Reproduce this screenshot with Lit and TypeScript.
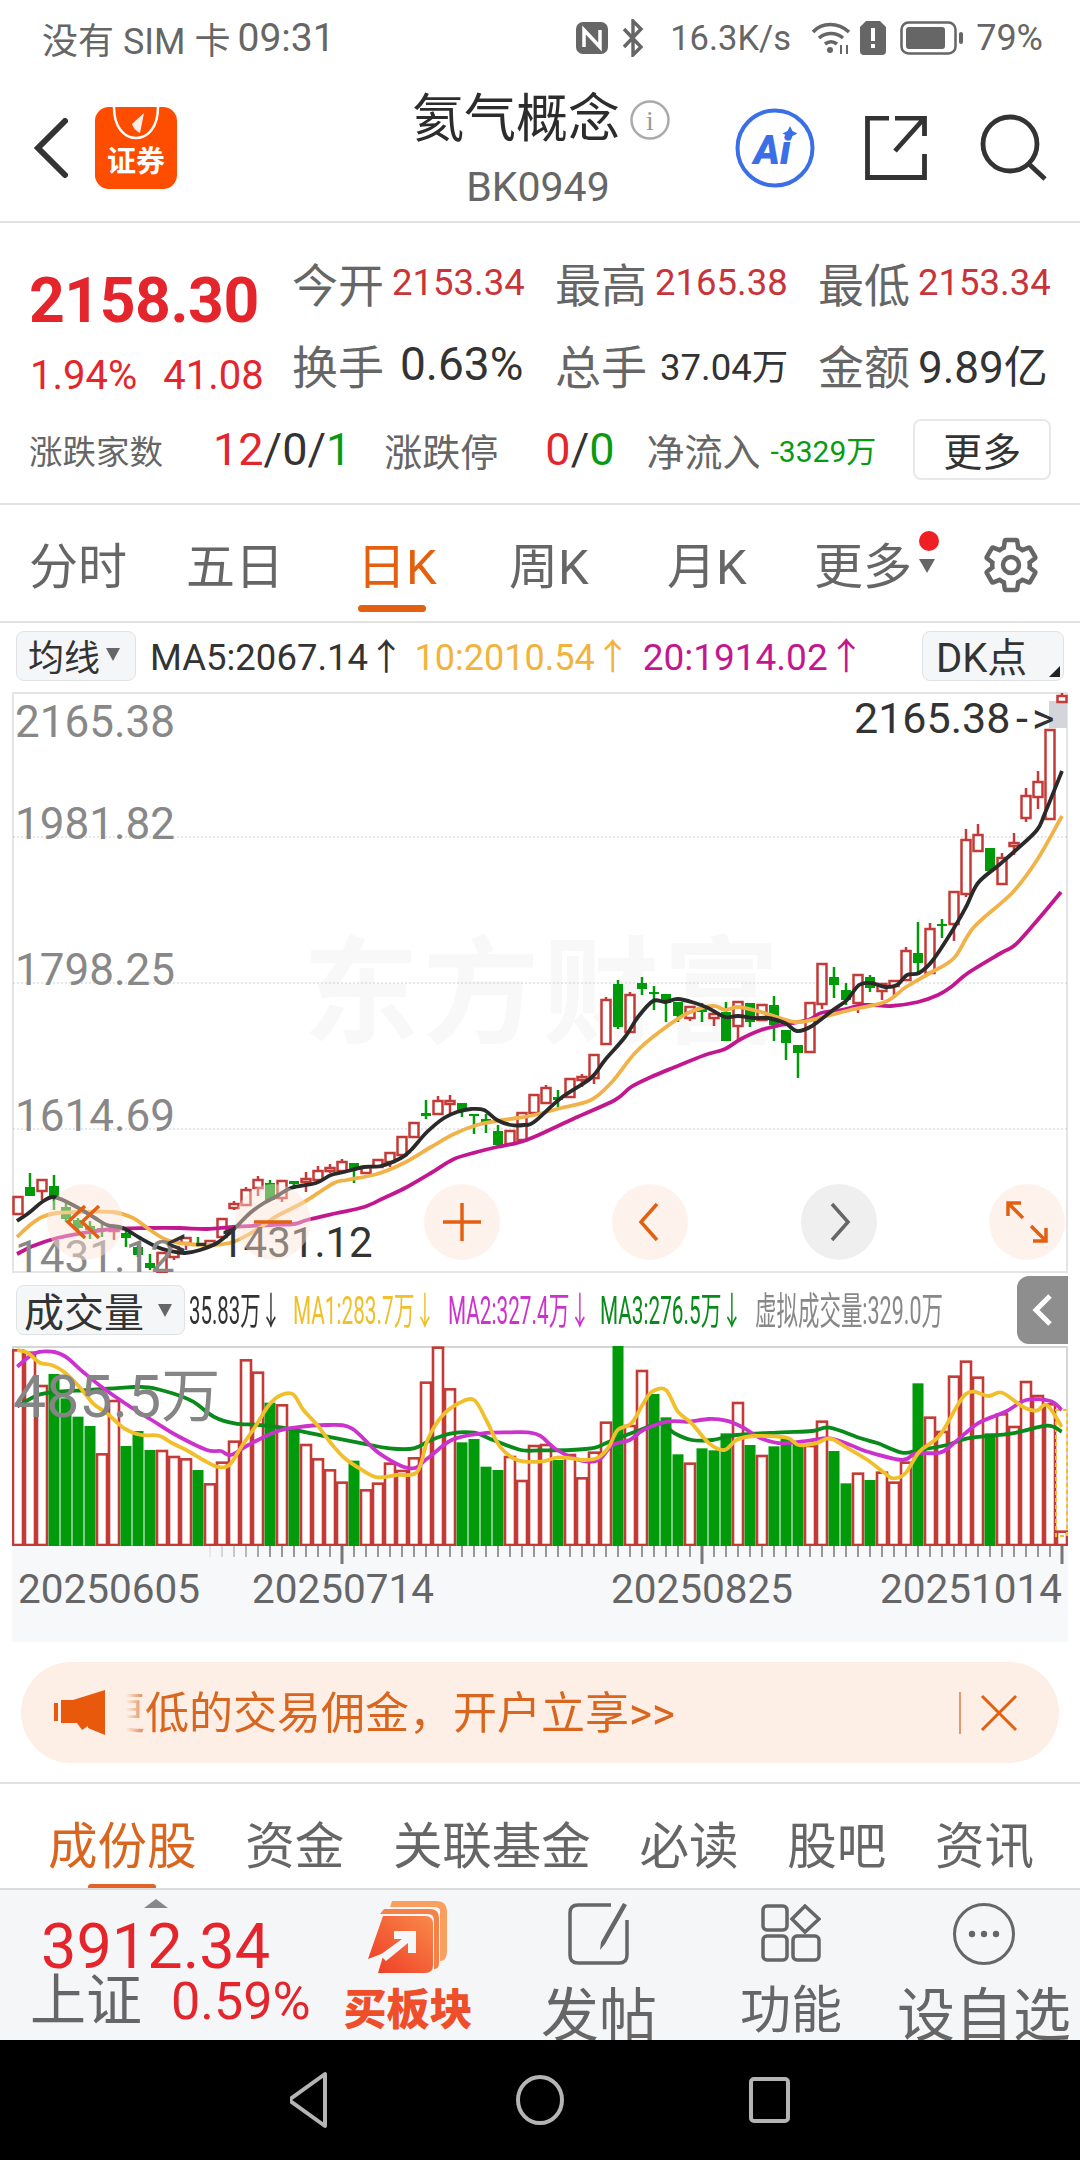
import { LitElement, html, css, svg } from 'lit';
import { customElement } from 'lit/decorators.js';

type Pt = number[];

// [colour, body top, body bottom, wick high, wick low, volume top in the zoomed crop]
const BARS: [string, number, number, number, number, number][] = [
  ['r',1197,1214,0,0,238],['g',1187,1196,1173,0,245],['r',1180,1191,0,1200,345],['g',1186,1199,1175,1210,312],
  ['g',1207,1219,1203,1222,385],['g',1220,1228,1218,1232,440],['g',1226,1230,1221,1239,468],['g',1228,1231,1224,1237,550],
  ['r',1228,1231,0,1240,390],['g',1233,1238,1228,1247,528],['g',1247,1255,1243,1257,483],['g',1263,1268,1254,1270,540],
  ['r',1253,1273,0,0,540],['r',1247,1257,0,1260,558],['r',1238,1243,0,1250,565],['g',1243,1245,1237,1247,600],
  ['r',1241,1245,0,1248,640],['r',1219,1237,0,0,575],['r',1204,1208,1201,1210,512],['r',1190,1205,1187,0,268],
  ['r',1180,1188,1176,1196,305],['g',1183,1200,1180,0,398],['r',1181,1198,0,1202,403],['g',1181,1184,0,1189,480],
  ['r',1179,1182,1172,1192,522],['r',1171,1180,1166,0,565],['r',1168,1171,1164,1173,598],['r',1162,1171,1159,0,635],
  ['g',1163,1170,0,1183,572],['r',1167,1173,1165,0,658],['r',1160,1167,0,0,638],['r',1153,1162,0,1167,578],
  ['r',1137,1155,0,0,600],['r',1123,1137,0,0,562],['g',1113,1116,1100,1119,335],['r',1101,1114,1096,0,230],
  ['r',1101,1104,1095,1113,355],['g',1103,1110,0,1117,517],['g',1114,1116,0,1134,507],['g',1119,1124,1114,1133,590],
  ['g',1131,1145,1125,1147,600],['r',1131,1144,0,0,558],['r',1113,1140,0,0,630],['r',1095,1113,0,0,525],
  ['r',1088,1103,1085,0,522],['g',1097,1100,1090,1107,570],['r',1079,1097,0,0,552],['r',1077,1080,1074,1087,622],
  ['r',1055,1078,0,1084,545],['r',1000,1044,997,0,455],['g',984,1027,980,1029,228],['r',995,1032,992,0,465],
  ['g',983,989,977,995,300],['g',992,994,986,1010,372],['g',994,1003,0,1022,442],['g',1002,1016,0,1022,553],
  ['r',1007,1018,0,1021,578],['g',1007,1012,1003,1022,535],['r',1014,1018,1010,1026,541],['g',1012,1041,1002,0,490],
  ['r',1002,1026,0,1041,396],['g',1003,1022,0,1027,525],['r',1005,1020,0,0,555],['g',1005,1025,996,1041,529],
  ['g',1030,1043,0,1060,505],['g',1045,1053,0,1078,520],['r',1003,1052,0,0,525],['r',964,1004,0,1009,452],
  ['g',977,985,967,998,543],['g',990,1000,983,1005,640],['r',975,1003,0,1013,608],['g',977,988,975,992,630],
  ['r',984,991,0,1000,605],['r',981,986,0,998,635],['r',951,980,947,0,575],['g',953,963,922,972,340],
  ['r',929,973,923,0,440],['g',924,926,919,938,483],['r',892,924,0,941,317],['r',840,894,829,897,272],
  ['r',835,851,824,0,320],['g',848,871,0,0,490],['r',858,884,853,0,430],['r',843,846,833,855,468],
  ['r',796,818,788,822,333],['r',782,797,771,809,375],['r',730,819,0,0,400],['r',696,702,693,0,782],
];
// a few volume colours differ from the candle colours in the reference
const VOL_COLOR: Record<number, string> = { 5:'g', 7:'r', 8:'r', 10:'g', 11:'g', 12:'r', 13:'r', 14:'r', 15:'g', 21:'g', 23:'g', 28:'g', 37:'g', 38:'g', 39:'g', 40:'g',
  45:'g', 50:'g', 52:'r', 53:'g', 54:'g', 55:'g', 56:'r', 57:'g', 58:'g', 59:'g', 60:'r', 61:'g', 62:'r', 63:'g', 64:'g', 65:'g', 68:'g', 69:'g', 70:'r', 71:'g', 75:'g', 81:'g', 34:'r', 3:'g', 4:'g', 6:'g', 9:'g', 1:'r' };

const MA5: Pt[] = [[17,1221],[30,1212],[42,1202],[53,1197],[67,1202],[82,1210],[95,1218],[107,1225],[123,1228],[140,1238],[157,1247],[170,1251],[185,1253],[200,1250],[217,1243],[233,1230],[250,1213],[264,1203],[277,1196],[291,1188],[316,1183],[331,1175],[344,1172],[364,1167],[381,1166],[401,1158],[411,1150],[427,1132],[444,1118],[457,1112],[471,1109],[484,1110],[497,1120],[511,1125],[524,1125],[534,1122],[561,1098],[591,1078],[605,1060],[625,1037],[638,1017],[653,1001],[665,1002],[678,999],[695,1003],[708,1008],[725,1017],[738,1016],[755,1018],[768,1018],[785,1023],[797,1031],[812,1026],[833,1010],[847,1000],[859,985],[871,983],[885,987],[897,985],[907,975],[919,973],[933,960],[954,928],[966,907],[978,883],[999,865],[1016,850],[1037,830],[1045,813],[1062,771]];
const MA10: Pt[] = [[17,1237],[30,1225],[42,1217],[57,1213],[80,1212],[113,1212],[133,1218],[150,1230],[167,1240],[187,1244],[213,1245],[233,1242],[253,1232],[264,1225],[277,1216],[304,1202],[334,1183],[347,1180],[377,1174],[404,1163],[431,1147],[454,1134],[477,1125],[497,1121],[517,1118],[534,1115],[561,1108],[591,1100],[611,1083],[635,1053],[658,1033],[688,1013],[713,1006],[725,1010],[738,1007],[761,1012],[795,1022],[819,1018],[850,1010],[885,1002],[906,987],[930,973],[954,958],[974,927],[1012,893],[1037,860],[1062,816]];
const MA20: Pt[] = [[17,1254],[33,1246],[57,1238],[83,1233],[113,1229],[147,1228],[180,1228],[207,1229],[233,1227],[270,1225],[294,1224],[307,1220],[337,1213],[364,1207],[384,1198],[407,1187],[431,1173],[454,1159],[477,1152],[497,1147],[517,1143],[534,1137],[575,1118],[615,1100],[631,1087],[651,1077],[675,1067],[705,1055],[725,1049],[741,1039],[761,1030],[781,1025],[808,1020],[821,1013],[841,1010],[865,1005],[891,1006],[918,1002],[938,995],[951,987],[968,973],[1001,953],[1015,945],[1035,923],[1061,892]];

// volume averages, read off the two zoomed crops and mapped below
const fromCrops = (l: Pt[], r: Pt[]) => [
  ...l.filter(p => p[0] < 1540).map(([x, y]) => [x / 2.9, y / 3 + 1270]),
  ...r.map(([x, y]) => [x / 2.9 + 540, y / 3 + 1270]),
];
const VMA1 = fromCrops(
  [[50,240],[80,248],[115,278],[150,285],[185,305],[230,350],[270,400],[310,430],[360,475],[410,495],[460,497],[500,520],[540,540],[590,570],[630,590],[665,585],[700,530],[740,470],[780,405],[815,375],[850,373],[880,420],[920,465],[960,520],[1000,565],[1050,600],[1095,622],[1150,615],[1210,605],[1240,510],[1280,440],[1330,400],[1375,390],[1410,450],[1450,530],[1500,570]],
  [[0,575],[50,563],[90,565],[130,570],[170,562],[200,530],[225,480],[265,460],[300,400],[325,365],[365,360],[400,425],[440,460],[490,520],[535,540],[570,510],[620,498],[715,503],[750,525],[800,520],[840,505],[885,530],[950,570],[1000,610],[1025,625],[1060,610],[1100,545],[1160,495],[1235,372],[1300,378],[1340,368],[1400,410],[1440,422],[1470,405],[1513,470]]);
const VMA2 = fromCrops(
  [[50,290],[100,250],[150,245],[190,260],[240,305],[300,355],[370,405],[440,450],[510,495],[600,540],[640,543],[670,555],[720,525],[800,485],[860,472],[950,465],[1020,475],[1100,550],[1190,595],[1240,565],[1310,510],[1400,490],[1480,487],[1530,487]],
  [[0,497],[50,540],[120,572],[170,570],[210,525],[260,510],[300,480],[370,455],[430,455],[490,447],[540,452],[590,473],[640,505],[700,520],[780,512],[840,505],[900,525],[950,545],[1050,570],[1090,550],[1160,548],[1200,520],[1270,460],[1350,425],[1410,390],[1480,393],[1513,420]]);
const VMA3 = fromCrops(
  [[50,410],[110,375],[170,365],[260,360],[370,352],[430,352],[500,370],[560,395],[620,440],[680,460],[750,465],[830,475],[950,500],[1050,520],[1130,535],[1200,535],[1250,510],[1310,490],[1375,488],[1430,510],[1510,540]],
  [[0,541],[90,540],[160,533],[200,515],[290,480],[350,460],[390,490],[440,510],[500,510],[570,495],[700,487],[790,483],[840,473],[930,505],[980,520],[1050,548],[1100,540],[1180,525],[1240,505],[1370,490],[1470,467],[1513,485]]);

const smooth = (p: Pt[]) => {
  let d = `M${p[0][0]} ${p[0][1]}`;
  for (let i = 0; i < p.length - 1; i++) {
    const a = p[Math.max(i - 1, 0)], b = p[i], c = p[i + 1], e = p[Math.min(i + 2, p.length - 1)];
    d += `C${(b[0] + (c[0] - a[0]) / 6).toFixed(1)} ${(b[1] + (c[1] - a[1]) / 6).toFixed(1)} ${(c[0] - (e[0] - b[0]) / 6).toFixed(1)} ${(c[1] - (e[1] - b[1]) / 6).toFixed(1)} ${c[0].toFixed(1)} ${c[1].toFixed(1)}`;
  }
  return d;
};

const RED = '#c43a36';
const GREEN = '#009a0a';

@customElement('app-root')
export class AppRoot extends LitElement {
  static styles = css`
    :host {
      display: block;
      width: 1080px;
      height: 2160px;
      overflow: hidden;
      background: #fff;
      font-family: Roboto, "Noto Sans CJK SC", sans-serif;
      color: #333;
    }
    svg { display: block; }
    .red { color: #e4262c; }
    .grn { color: #0a9a12; }

    .status { height: 70px; display: flex; align-items: center; padding: 6px 37px 0 42px; box-sizing: border-box; font-size: 36px; color: #666; }
    .status .time { margin-left: 7px; font-size: 39px; }
    .status .right { margin-left: auto; display: flex; align-items: center; }
    .speed { margin: 0 20px 0 25px; font-size: 34.5px; }
    .pct { margin-left: 12px; }

    .header { height: 153px; border-bottom: 2px solid #e2e2e2; box-sizing: border-box; display: flex; align-items: flex-start; }
    .back { margin: 48px 0 0 34px; }
    .app-icon { margin: 37px 0 0 27px; }
    .title-box { margin: 20px 0 0 235px; width: 258px; display: flex; flex-direction: column; align-items: center; }
    .title-row { display: flex; align-items: center; height: 60px; }
    .title { font-size: 52px; line-height: 60px; color: #2c2c2c; }
    .info { margin-left: 10px; }
    .code { font-size: 41px; line-height: 44px; color: #666; margin-top: 15px; margin-right: 6px; }
    .ai { margin: 38px 0 0 65px; }
    .share { margin: 46px 0 0 50px; }
    .search { margin: 44px 0 0 53px; }

    .quote { height: 282px; border-bottom: 2px solid #e2e2e2; box-sizing: border-box; position: relative; display: grid; grid-template-columns: 292px 263px 263px 262px; grid-template-rows: 82px 82px 100px; padding-top: 18px; }
    .price-main { font-size: 62.5px; font-weight: 700; line-height: 82px; padding: 19px 0 0 29px; color: #e4262c; letter-spacing: -.5px; }
    .stat { display: flex; align-items: center; }
    .stat b { font-weight: 400; font-size: 46px; color: #666; width: 100px; flex: none; }
    .stat span { font-size: 36.5px; white-space: nowrap; }
    .stat span.big { font-size: 46px; margin-left: 8px; }
    .stat span.mid { font-size: 44px; }
    .stat span.wan { font-size: 36.5px; margin-left: 5px; }
    .stat span { color: #c8343a; }
    .stat span.big, .stat span.mid, .stat span.wan { color: #333; }
    .change { font-size: 40px; color: #e4262c; padding: 22px 0 0 30px; display: flex; gap: 26px; align-items: center; }
    .row3 { grid-column: 1 / 5; display: flex; align-items: center; font-size: 38px; color: #666; padding: 0 0 12px 29px; }
    .row3 .lbl-s { font-size: 33.5px; }
    .row3 .ratio { font-size: 45px; color: #333; }
    .row3 .r1 { margin-left: 50px; }
    .row3 .l2 { margin-left: 33px; }
    .row3 .r2 { margin-left: 47px; }
    .row3 .l3 { margin-left: 32px; }
    .row3 .flow { font-size: 30px; color: #0a9a12; margin-left: 10px; }
    .more-btn { margin-left: 37px; width: 138px; height: 61px; border: 2px solid #e8e8e8; border-radius: 8px; box-sizing: border-box; font-size: 39px; color: #333; display: flex; align-items: center; justify-content: center; }

    .periods { height: 118px; border-bottom: 2px solid #e2e2e2; box-sizing: border-box; display: grid; grid-template-columns: 157px 171px 152px 158px 147px 167px auto; padding-left: 29px; position: relative; }
    .period { font-size: 49px; line-height: 58px; padding-top: 34px; color: #666; position: relative; white-space: nowrap; }
    .period.on { color: #e2600f; }
    .period.on::after { content: ""; position: absolute; left: 1px; top: 100px; width: 68px; height: 7px; border-radius: 4px; background: #e2600f; }
    .dot { position: absolute; left: 105px; top: 26px; width: 20px; height: 20px; border-radius: 50%; background: #f01f24; }
    .caret { position: absolute; left: 105px; top: 54px; width: 0; height: 0; border-left: 8px solid transparent; border-right: 8px solid transparent; border-top: 14px solid #666; }
    .gear { margin-top: 30px; }

    .ma-row { height: 69px; box-sizing: border-box; padding: 8px 16px 11px; display: flex; align-items: center; font-size: 36px; white-space: nowrap; }
    .ma-row > span { margin-bottom: 4px; }
    .select { height: 50px; box-sizing: border-box; border: 1.5px solid #e0e2e6; border-radius: 8px; background: #f5f6f8; display: flex; align-items: center; color: #333; }
    .select.avg { width: 120px; padding: 0 0 3px 11px; gap: 6px; margin-right: 14px; }
    .tri { width: 0; height: 0; border-left: 7px solid transparent; border-right: 7px solid transparent; border-top: 13px solid #666; }
    .ma5 { color: #333; font-size: 36.5px; }
    .ma10 { color: #f2b33d; margin-left: 10px; }
    .ma20 { color: #c2188f; margin-left: 12px; font-size: 37px; }
    .select.dk { margin-left: auto; width: 142px; padding: 0 0 3px 13px; position: relative; font-size: 40px; }
    .select.dk::after { content: ""; position: absolute; right: 3px; bottom: 3px; border-left: 11px solid transparent; border-bottom: 11px solid #222; }

    .kline { position: relative; width: 1056px; height: 581px; margin-left: 12px; }
    .axis-label { font-size: 44px; fill: #888; }
    .tip { font-size: 43px; fill: #333; }
    .tip.low { font-size: 42px; }
    .watermark { font-size: 116px; font-weight: 700; fill: #f8f8f8; letter-spacing: 4px; }
    .tools { position: absolute; left: 35px; top: 492px; width: 1018px; display: flex; justify-content: space-between; }
    .tool { width: 76px; height: 76px; border-radius: 50%; background: rgba(252, 226, 212, .45); }
    .tool.grey { background: rgba(235, 235, 235, .8); }

    .vol-row { height: 73px; box-sizing: border-box; padding-left: 16px; display: flex; align-items: flex-start; position: relative; }
    .select.vol { width: 169px; margin-top: 12px; padding-left: 7px; font-size: 40px; gap: 14px; flex: none; }
    .legend { display: flex; margin: 15px 0 0 4px; font-size: 38px; line-height: 46px; white-space: nowrap; }
    .lg { flex: none; }
    .lg span { display: inline-block; transform-origin: 0 50%; }
    .lg-now { width: 104px; color: #333; }
    .lg-now span { transform: scaleX(.537); }
    .lg-1 { width: 155px; color: #f0bf2a; }
    .lg-2 { width: 152px; color: #cc33cc; }
    .lg-3 { width: 155px; color: #0a8a1a; }
    .lg-1 span, .lg-2 span, .lg-3 span { transform: scaleX(.546); }
    .lg-v { width: 188px; color: #888; }
    .lg-v span { transform: scaleX(.565); }
    .collapse { position: absolute; left: 1017px; top: 3px; width: 51px; height: 68px; border-radius: 12px 0 0 12px; background: #8e8e8e; display: flex; align-items: center; justify-content: center; }

    .vol-chart { width: 1056px; height: 200px; margin-left: 12px; }
    .vol-label { font-size: 59px; fill: #858585; }
    .axis { width: 1056px; height: 96px; margin-left: 12px; background: #f7f8fa; }
    .date { font-size: 40.5px; fill: #666; }

    .banner-wrap { height: 142px; box-sizing: border-box; border-bottom: 2px solid #e2e2e2; padding: 20px 21px 0; }
    .banner { height: 101px; border-radius: 51px; background: #fdeee6; display: flex; align-items: center; padding-left: 33px; font-size: 44px; color: #d9661f; }
    .ticker { margin-left: 20px; width: 560px; padding-bottom: 5px; overflow: hidden; white-space: nowrap; -webkit-mask-image: linear-gradient(90deg, transparent, #000 24px); mask-image: linear-gradient(90deg, transparent, #000 24px); }
    .ticker span { margin-left: -25px; display: inline-block; }
    .divider { margin-left: 273px; width: 1.5px; height: 42px; background: #e09a70; }
    .close { margin-left: 19px; }

    .tabs { height: 104px; display: flex; gap: 48.7px; padding: 33px 0 0 48px; box-sizing: border-box; position: relative; font-size: 49.5px; line-height: 60px; color: #666; }
    .tab.on { color: #d9661f; }
    .tab-bar { position: absolute; left: 88px; bottom: 0; width: 68px; height: 4px; background: #e2632a; border-radius: 3px 3px 0 0; }

    .dock { height: 152px; overflow: hidden; background: #f5f6f8; border-top: 2px solid #dcdcdc; box-sizing: border-box; display: grid; grid-template-columns: 330px 156px 226px 158px 228px; }
    .index { position: relative; padding-left: 30px; }
    .index .up { position: absolute; left: 144px; top: 9px; border-left: 12px solid transparent; border-right: 12px solid transparent; border-bottom: 9px solid #888; }
    .index .val { font-size: 63px; line-height: 70px; margin: 22px 0 0 11px; color: #e4262c; }
    .index .sub { display: flex; align-items: center; margin-top: -13px; }
    .index .name { font-size: 56px; line-height: 64px; color: #666; }
    .index .rate { font-size: 52px; color: #e4262c; margin-left: 29px; }
    .dock-item { display: flex; flex-direction: column; align-items: center; color: #666; white-space: nowrap; }
    .dock-item.post { font-size: 58px; line-height: 66px; }
    .dock-item.func { font-size: 51px; line-height: 58px; }
    .dock-item.buy { font-size: 43px; line-height: 50px; font-weight: 900; color: #ee4f2a; }
    .buy svg { margin-top: 11px; }
    .buy span { margin-top: 10px; }
    .post svg { margin-top: 12px; }
    .post span { margin-top: 17px; }
    .func svg { margin-top: 14px; }
    .func span { margin-top: 20px; }

    .nav { height: 120px; background: #000; display: flex; align-items: center; justify-content: center; }
    .nav svg { margin-left: 20px; }
  `;

  candles() {
    return BARS.map((b, i) => {
      const cx = 18 + 12 * i;
      const color = b[0] === 'r' ? RED : GREEN;
      const wick = b[3] || b[4] ? svg`<line x1=${cx} x2=${cx} y1=${b[3] || b[1]} y2=${b[4] || b[2]} stroke=${color} stroke-width="2.5" />` : null;
      return b[0] === 'r'
        ? svg`${wick}<rect x=${cx - 4.5} y=${b[1]} width="9" height=${b[2] - b[1]} fill="#fff" stroke=${color} stroke-width="2.5" />`
        : svg`${wick}<rect x=${cx - 5} y=${b[1]} width="10" height=${b[2] - b[1]} fill=${color} />`;
    });
  }

  volumes() {
    return BARS.map((b, i) => {
      const x = 12 + 12 * i;
      const top = b[5] / 3 + 1270;
      const isRed = (VOL_COLOR[i] ?? 'r') === 'r';
      return isRed
        ? svg`<rect x=${x + 1} y=${top + 1} width="10" height=${1546 - top - 2} fill="#fff" stroke=${RED} stroke-width="2.6" />`
        : svg`<rect x=${x + .5} y=${top} width="11" height=${1546 - top} fill=${GREEN} />`;
    });
  }

  ticks() {
    const out = [];
    for (let i = 16; i < 88; i++) {
      const x = 18 + 12 * i;
      const major = x === 342 || x === 702 || x === 1062;
      out.push(svg`<line x1=${x} x2=${x} y1="1546" y2=${major ? 1564 : 1557} stroke="#777" stroke-width=${major ? 3 : 1.5} opacity=${Math.min(1, (x - 198) / 72).toFixed(2)} />`);
    }
    return out;
  }

  render() {
    return html`
      <div class="status">
        <span>没有 SIM 卡</span><span class="time">09:31</span>
        <div class="right">
          <svg width="34" height="34" viewBox="0 0 34 34">
            <rect x="1" y="1" width="32" height="32" rx="7" fill="#666" />
            <path d="M9 26V9l16 17V9" fill="none" stroke="#fff" stroke-width="3.5" />
          </svg>
          <svg style="margin-left:12px" width="24" height="38" viewBox="0 0 24 38">
            <path d="M3 10l17 18-8 8V2l8 8L3 28" fill="none" stroke="#666" stroke-width="3.4" />
          </svg>
          <span class="speed">16.3K/s</span>
          <svg width="40" height="34" viewBox="0 0 40 34">
            <path d="M2 11C11 1 27 1 38 11M8 17c7-6 17-6 24 0M14 23c4-3 8-3 12 0" fill="none" stroke="#666" stroke-width="3.6" />
            <circle cx="19" cy="29" r="3" fill="#666" />
            <path d="M30 24v9M36 24v9" stroke="#666" stroke-width="2" />
          </svg>
          <svg style="margin-left:8px" width="28" height="36" viewBox="0 0 28 36">
            <path d="M7 1h14l6 6v24a4 4 0 0 1-4 4H5a4 4 0 0 1-4-4V7z" fill="#666" />
            <rect x="12" y="8" width="4" height="13" fill="#fff" /><rect x="12" y="24" width="4" height="4" fill="#fff" />
          </svg>
          <svg style="margin-left:13px" width="64" height="34" viewBox="0 0 64 34">
            <rect x="1.5" y="1.5" width="54" height="31" rx="7" fill="none" stroke="#666" stroke-width="2.5" />
            <rect x="6" y="6" width="39" height="22" rx="3" fill="#666" />
            <rect x="59" y="11" width="4" height="12" rx="2" fill="#666" />
          </svg>
          <span class="pct">79%</span>
        </div>
      </div>

      <div class="header">
        <svg class="back" width="34" height="60" viewBox="0 0 34 60"><path d="M31 3L4 30l27 27" fill="none" stroke="#333" stroke-width="6" stroke-linecap="round" /></svg>
        <svg class="app-icon" width="82" height="82" viewBox="0 0 82 82">
          <rect width="82" height="82" rx="14" fill="#ff4d00" />
          <path d="M19 0c0 20 10 31 22 31S63 20 63 0" fill="none" stroke="#fff" stroke-width="2.5" />
          <path d="M37 17l12-11-4 20c-4-2-7-5-8-9z" fill="#fff" opacity=".9" />
          <text x="41" y="65" text-anchor="middle" font-size="29" font-weight="700" fill="#fff">证券</text>
        </svg>
        <div class="title-box">
          <div class="title-row">
            <span class="title">氦气概念</span>
            <svg class="info" width="40" height="40" viewBox="0 0 40 40">
              <circle cx="20" cy="20" r="18.5" fill="none" stroke="#aaa" stroke-width="2.5" />
              <text x="20" y="30" text-anchor="middle" font-size="28" font-family="Liberation Serif, serif" fill="#999">i</text>
            </svg>
          </div>
          <div class="code">BK0949</div>
        </div>
        <svg class="ai" width="80" height="80" viewBox="0 0 80 80">
          <circle cx="40" cy="40" r="37.5" fill="#fff" stroke="#3b6fe8" stroke-width="4" />
          <text x="37" y="56" text-anchor="middle" font-size="40" font-weight="900" font-style="italic" fill="#3b6fe8">Ai</text>
          <path d="M55 18l2.5 5 5 2.5-5 2.5-2.5 5-2.5-5-5-2.5 5-2.5z" fill="#3b6fe8" />
        </svg>
        <svg class="share" width="62" height="64" viewBox="0 0 62 64">
          <path d="M24 2H2.500V61.500H59.500V38M30 2H59.500V20M59.500 2L30 35" fill="none" stroke="#333" stroke-width="4.800" />
        </svg>
        <svg class="search" width="68" height="68" viewBox="0 0 68 68">
          <circle cx="30" cy="30" r="27" fill="none" stroke="#333" stroke-width="4.800" />
          <path d="M49 50l16 15" stroke="#333" stroke-width="4.800" />
        </svg>
      </div>

      <div class="quote">
        <div class="price-main">2158.30</div>
        <div class="stat"><b>今开</b><span>2153.34</span></div>
        <div class="stat"><b>最高</b><span>2165.38</span></div>
        <div class="stat"><b>最低</b><span>2153.34</span></div>
        <div class="change"><span>1.94%</span><span>41.08</span></div>
        <div class="stat"><b>换手</b><span class="big">0.63%</span></div>
        <div class="stat"><b>总手</b><span class="wan">37.04万</span></div>
        <div class="stat"><b>金额</b><span class="mid">9.89亿</span></div>
        <div class="row3">
          <span class="lbl-s">涨跌家数</span>
          <span class="ratio r1"><span class="red">12</span>/0/<span class="grn">1</span></span>
          <span class="l2">涨跌停</span>
          <span class="ratio r2"><span class="red">0</span>/<span class="grn">0</span></span>
          <span class="l3">净流入</span>
          <span class="flow">-3329万</span>
          <div class="more-btn">更多</div>
        </div>
      </div>

      <div class="periods">
        <div class="period">分时</div>
        <div class="period">五日</div>
        <div class="period on">日K</div>
        <div class="period">周K</div>
        <div class="period">月K</div>
        <div class="period">更多<i class="dot"></i><i class="caret"></i></div>
        <svg class="gear" width="60" height="60" viewBox="0 0 24 24">
          <path d="M19.430 12.980c.04-.32.07-.64.07-.98s-.03-.66-.07-.98l2.110-1.650c.19-.15.24-.42.12-.64l-2-3.460c-.12-.22-.39-.3-.61-.22l-2.490 1c-.52-.4-1.080-.73-1.690-.98l-.38-2.650A.49.49 0 0 0 14 2h-4c-.25 0-.46.18-.49.42l-.38 2.650c-.61.25-1.170.59-1.690.98l-2.490-1c-.23-.08-.49 0-.61.22l-2 3.460c-.13.22-.07.49.12.64l2.110 1.650c-.04.32-.07.65-.07.98s.03.66.07.98l-2.110 1.650c-.19.15-.24.42-.12.64l2 3.460c.12.22.39.3.61.22l2.490-1c.52.4 1.080.73 1.690.98l.38 2.650c.03.24.24.42.49.42h4c.25 0 .46-.18.49-.42l.38-2.650c.61-.25 1.170-.59 1.690-.98l2.490 1c.23.08.49 0 .61-.22l2-3.460c.12-.22.07-.49-.12-.64z" fill="none" stroke="#666" stroke-width="1.800" />
          <circle cx="12" cy="12" r="3.200" fill="none" stroke="#666" stroke-width="1.800" />
        </svg>
      </div>

      <div class="ma-row">
        <div class="select avg">均线<i class="tri"></i></div>
        <span class="ma5">MA5:2067.14↑</span>
        <span class="ma10">10:2010.54↑</span>
        <span class="ma20">20:1914.02↑</span>
        <div class="select dk">DK点</div>
      </div>

      <div class="kline">
        <svg width="1056" height="581" viewBox="12 692 1056 581">
          <rect x="13" y="693" width="1054" height="579" fill="#fff" stroke="#e4e4e4" stroke-width="2" />
          <text class="watermark" x="303" y="1034">东方财富</text>
          ${[837, 983, 1129].map(y => svg`<line x1="13" x2="1067" y1=${y} y2=${y} stroke="#cfcfcf" stroke-width="1" stroke-dasharray="2 2" />`)}
          <rect x="1049" y="701" width="18" height="27" fill="#d3d5da" />
          ${this.candles()}
          <path d=${smooth(MA20)} fill="none" stroke="#c2188f" stroke-width="3.800" />
          <path d=${smooth(MA10)} fill="none" stroke="#f2b24a" stroke-width="3.800" />
          <path d=${smooth(MA5)} fill="none" stroke="#2a2a2a" stroke-width="3.800" />
          <text class="axis-label" x="15" y="737">2165.38</text>
          <text class="axis-label" x="15" y="839">1981.82</text>
          <text class="axis-label" x="15" y="985">1798.25</text>
          <text class="axis-label" x="15" y="1131">1614.69</text>
          <text class="axis-label" x="15" y="1272">1431.12</text>
          <text class="tip" x="854" y="733">2165.38<tspan x="1016" letter-spacing="4">-></tspan></text>
          <text class="tip low" x="166" y="1257" letter-spacing="8">&lt;-<tspan x="220" letter-spacing="0">1431.12</tspan></text>
        </svg>
        <div class="tools">
          <svg class="tool" viewBox="-38 -38 76 76"><path d="M0-16L-17 0 0 16M14-16L-3 0 14 16" fill="none" stroke="#e2600f" stroke-width="3.500" /></svg>
          <svg class="tool" viewBox="-38 -38 76 76"><path d="M-19 0H19" stroke="#e2600f" stroke-width="3.500" /></svg>
          <svg class="tool" viewBox="-38 -38 76 76"><path d="M-19 0H19M0-19V19" stroke="#e2600f" stroke-width="3.500" /></svg>
          <svg class="tool" viewBox="-38 -38 76 76"><path d="M7-18L-9 0 7 18" fill="none" stroke="#e2600f" stroke-width="3.500" /></svg>
          <svg class="tool grey" viewBox="-38 -38 76 76"><path d="M-7-18L9 0-7 18" fill="none" stroke="#666" stroke-width="3.500" /></svg>
          <svg class="tool" viewBox="-38 -38 76 76"><path d="M-19-6V-19H-6M-19-19L-4-4M6 19H19V6M19 19L4 4" fill="none" stroke="#e2600f" stroke-width="3.500" /></svg>
        </div>
      </div>

      <div class="vol-row">
        <div class="select vol">成交量<i class="tri"></i></div>
        <div class="legend">
          <div class="lg lg-now"><span>35.83万↓</span></div>
          <div class="lg lg-1"><span>MA1:283.7万↓</span></div>
          <div class="lg lg-2"><span>MA2:327.4万↓</span></div>
          <div class="lg lg-3"><span>MA3:276.5万↓</span></div>
          <div class="lg lg-v"><span>虚拟成交量:329.0万</span></div>
        </div>
        <div class="collapse">
          <svg width="24" height="36" viewBox="0 0 24 36"><path d="M19 4L5 18l14 14" fill="none" stroke="#fff" stroke-width="5" /></svg>
        </div>
      </div>

      <svg class="vol-chart" viewBox="12 1346 1056 200">
        <rect x="13" y="1347" width="1054" height="199" fill="#fff" stroke="#c8c8c8" stroke-width="1.500" />
        ${this.volumes()}
        <rect x="1056" y="1410" width="11" height="126" fill="none" stroke="#f0bf2a" stroke-width="2" stroke-dasharray="4 3" />
        <path d=${smooth(VMA3)} fill="none" stroke="#0a8a1a" stroke-width="3.800" />
        <path d=${smooth(VMA2)} fill="none" stroke="#cc33cc" stroke-width="3.800" />
        <path d=${smooth(VMA1)} fill="none" stroke="#f0bf2a" stroke-width="3.800" />
        <text class="vol-label" x="13" y="1417">485.5万</text>
      </svg>

      <svg class="axis" viewBox="12 1546 1056 96">
        ${this.ticks()}
        <text class="date" x="18" y="1603">20250605</text>
        <text class="date" x="252" y="1603">20250714</text>
        <text class="date" x="611" y="1603">20250825</text>
        <text class="date" x="880" y="1603">20251014</text>
      </svg>

      <div class="banner-wrap">
        <div class="banner">
          <svg width="52" height="45" viewBox="0 0 52 45">
            <path d="M0 13h4v18H0zM7 10h12L51 0v45L34 38v-2l-6 4-5-7H7z" fill="#e8590c" />
          </svg>
          <div class="ticker"><span>更低的交易佣金，开户立享>></span></div>
          <i class="divider"></i>
          <svg class="close" width="38" height="38" viewBox="0 0 38 38"><path d="M2 2l34 34M36 2L2 36" stroke="#e2600f" stroke-width="3" /></svg>
        </div>
      </div>

      <div class="tabs">
        <span class="tab on">成份股</span><span class="tab">资金</span><span class="tab">关联基金</span><span class="tab">必读</span><span class="tab">股吧</span><span class="tab">资讯</span>
        <i class="tab-bar"></i>
      </div>

      <div class="dock">
        <div class="index">
          <i class="up"></i>
          <div class="val">3912.34</div>
          <div class="sub"><span class="name">上证</span><span class="rate">0.59%</span></div>
        </div>
        <div class="dock-item buy">
          <svg width="80" height="74" viewBox="0 0 80 74">
            <defs>
              <linearGradient id="buyA" x1="0" y1="1" x2="1" y2="0"><stop offset="0" stop-color="#ee3a24" /><stop offset="1" stop-color="#f98a4a" /></linearGradient>
            </defs>
            <path d="M24 0H68Q79 0 79 11V50Q79 60 72 60V10Q72 6 66 6H22Z" fill="#f9a060" />
            <path d="M16 8H62Q71 8 71 17V62Q71 68 66 68V20Q66 13 60 13H12Z" fill="#f6804a" />
            <path d="M15 15H57Q65 15 65 23V64Q65 72 57 72H10L16 52 0 58Z" fill="url(#buyA)" />
            <path d="M26 30H48V52H40V42L18 60 12 54 34 38H26Z" fill="#f5f6f8" />
          </svg>
          <span>买板块</span>
        </div>
        <div class="dock-item post">
          <svg width="64" height="64" viewBox="0 0 64 64">
            <path d="M44 3H11Q3 3 3 11V53Q3 61 11 61H52Q60 61 60 53V18" fill="none" stroke="#666" stroke-width="3.500" />
            <path d="M60 3L38 42l-5 6 1-8L56 1z" fill="#666" />
          </svg>
          <span>发帖</span>
        </div>
        <div class="dock-item func">
          <svg width="60" height="58" viewBox="0 0 60 58">
            <rect x="2" y="2" width="24" height="24" rx="4" fill="none" stroke="#666" stroke-width="3.500" />
            <path d="M44 2L58 15 44 28 31 15z" fill="none" stroke="#666" stroke-width="3.500" />
            <rect x="2" y="32" width="24" height="24" rx="4" fill="none" stroke="#666" stroke-width="3.500" />
            <rect x="32" y="32" width="26" height="24" rx="4" fill="none" stroke="#666" stroke-width="3.500" />
          </svg>
          <span>功能</span>
        </div>
        <div class="dock-item post">
          <svg width="64" height="64" viewBox="0 0 64 64">
            <circle cx="32" cy="32" r="29.500" fill="none" stroke="#666" stroke-width="3" />
            <circle cx="20" cy="32" r="3.200" fill="#666" /><circle cx="32" cy="32" r="3.200" fill="#666" /><circle cx="44" cy="32" r="3.200" fill="#666" />
          </svg>
          <span>设自选</span>
        </div>
      </div>

      <div class="nav">
        <svg width="520" height="60" viewBox="0 0 520 60">
          <path d="M35 4V56L-1 30Z" fill="none" stroke="#b4b4b4" stroke-width="4" stroke-linejoin="round" />
          <ellipse cx="250" cy="30" rx="22" ry="23" fill="none" stroke="#b4b4b4" stroke-width="4" />
          <rect x="461" y="9" width="37" height="42" rx="3" fill="none" stroke="#b4b4b4" stroke-width="4" />
        </svg>
      </div>
    `;
  }
}
